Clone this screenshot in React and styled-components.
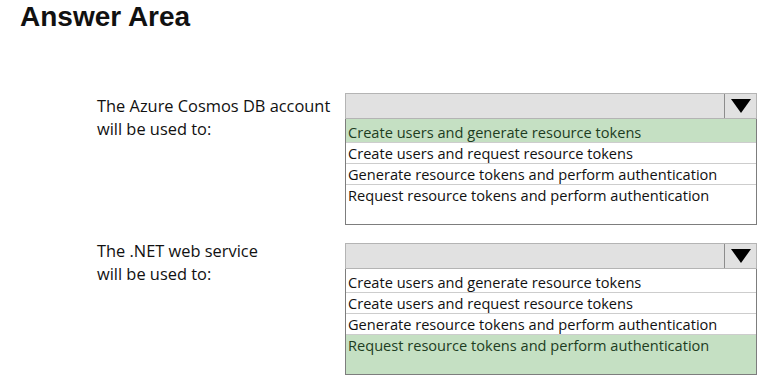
import React from "react";
import styled, { createGlobalStyle } from "styled-components";

const GlobalStyle = createGlobalStyle`
  body {
    margin: 0;
    background: #ffffff;
  }
`;

const options = [
  "Create users and generate resource tokens",
  "Create users and request resource tokens",
  "Generate resource tokens and perform authentication",
  "Request resource tokens and perform authentication",
];

const questions = [
  { label: ["The Azure Cosmos DB account", "will be used to:"], answer: 0, offset: 1 },
  { label: ["The .NET web service", "will be used to:"], answer: 3, offset: -4 },
];

const App = () => {
  return (
    <Page>
      <GlobalStyle />
      <Title>Answer Area</Title>
      <Questions>
        {questions.map((q, i) => (
          <Question key={i}>
            <Label $offset={q.offset}>
              {q.label.map((line) => (
                <div key={line}>{line}</div>
              ))}
            </Label>
            <Dropdown>
              <Header>
                <Arrow>
                  <svg width="20" height="14" viewBox="0 0 20 14">
                    <polygon points="0,0 20,0 10,14" fill="#000" />
                  </svg>
                </Arrow>
              </Header>
              <List>
                {options.map((opt, j) => (
                  <Option
                    key={opt}
                    $selected={j === q.answer}
                    $first={j === 0}
                    $last={j === options.length - 1}
                  >
                    {opt}
                  </Option>
                ))}
              </List>
            </Dropdown>
          </Question>
        ))}
      </Questions>
    </Page>
  );
};

const Page = styled.div`
  width: 777px;
  height: 391px;
  overflow: hidden;
  background: #ffffff;
`;

const Title = styled.h1`
  margin: 0;
  padding: 1px 0 0 20px;
  font-family: "Liberation Sans", Arial, sans-serif;
  font-weight: bold;
  font-size: 28px;
  line-height: 32px;
  color: #111;
`;

const Questions = styled.div`
  display: flex;
  flex-direction: column;
  gap: 18px;
  margin-top: 60px;
`;

const Question = styled.div`
  display: flex;
  align-items: flex-start;
`;

const Label = styled.div`
  width: 248px;
  padding-left: 97px;
  margin-top: ${(p) => p.$offset}px;
  font-family: "Open Sans", "Noto Sans", sans-serif;
  font-size: 16.4px;
  line-height: 23px;
  color: #111;
`;

const Dropdown = styled.div`
  width: 412px;
  display: flex;
  flex-direction: column;
`;

const Header = styled.div`
  height: 24px;
  display: flex;
  justify-content: flex-end;
  background: #e1e1e1;
  border: 1px solid #b4b4b4;
`;

const Arrow = styled.div`
  width: 31px;
  display: flex;
  align-items: center;
  justify-content: center;
  border-left: 1px solid #8c8c8c;
`;

const List = styled.div`
  height: 105px;
  display: flex;
  flex-direction: column;
  border: 1px solid #7d7d7d;
  border-top: none;
  background: #ffffff;
`;

const Option = styled.div`
  flex: ${(p) => (p.$last ? "1" : p.$first ? "0 0 24px" : "0 0 21px")};
  padding: ${(p) => (p.$first ? "3px" : "0")} 0 0 2px;
  box-sizing: border-box;
  font-family: "Open Sans", "Noto Sans", sans-serif;
  font-size: 14.6px;
  line-height: 20px;
  color: ${(p) => (p.$selected ? "#1d3d1f" : "#111")};
  background: ${(p) => (p.$selected ? "#c5e0c3" : "#ffffff")};
  border-bottom: ${(p) => (p.$last ? "none" : "1px solid #cdcdcd")};
  white-space: nowrap;
`;

export default App;
